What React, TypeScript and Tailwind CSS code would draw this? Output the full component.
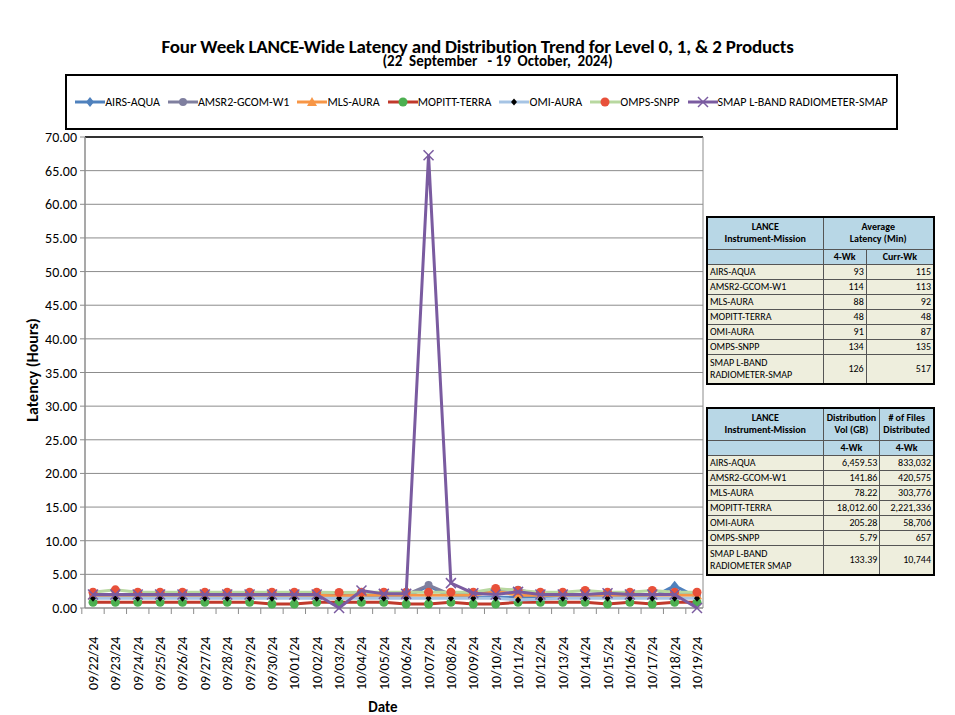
import React from 'react';

const dates = [
  '09/22/24','09/23/24','09/24/24','09/25/24','09/26/24','09/27/24','09/28/24','09/29/24','09/30/24','10/01/24',
  '10/02/24','10/03/24','10/04/24','10/05/24','10/06/24','10/07/24','10/08/24','10/09/24','10/10/24','10/11/24',
  '10/12/24','10/13/24','10/14/24','10/15/24','10/16/24','10/17/24','10/18/24','10/19/24',
];

const fill = (v: number, o: Record<number, number> = {}) => dates.map((_, i) => (o[i] !== undefined ? o[i] : v));

const series = [
  { name: 'AIRS-AQUA', color: '#4f81bd', marker: 'diamond', data: fill(1.6, { 15: 3.3, 26: 3.3, 11: 1.5 }) },
  { name: 'AMSR2-GCOM-W1', color: '#7f7f9f', marker: 'circle', data: fill(2.0, { 11: 1.9, 15: 3.4, 18: 2.6, 19: 2.7 }) },
  { name: 'MLS-AURA', color: '#f79646', marker: 'triangle', data: fill(1.9, { 11: 1.8, 18: 2.5 }) },
  { name: 'MOPITT-TERRA', color: '#c0392b', marker: 'gcircle', data: fill(0.85, { 8: 0.6, 9: 0.6, 14: 0.6, 15: 0.6, 17: 0.6, 18: 0.6, 23: 0.6, 25: 0.6 }) },
  { name: 'OMI-AURA', color: '#a6c4e4', marker: 'black', data: fill(1.45, { 19: 1.2, 20: 1.3 }) },
  { name: 'OMPS-SNPP', color: '#b8d8a0', marker: 'dot', data: fill(2.35, { 1: 2.7, 18: 2.9, 19: 2.6, 22: 2.6, 25: 2.6, 11: 2.3 }) },
  { name: 'SMAP L-BAND RADIOMETER-SMAP', color: '#7a5ba0', marker: 'x', data: fill(2.0, { 11: 0, 12: 2.6, 13: 2.1, 14: 2.1, 15: 67.3, 16: 3.7, 17: 2.2, 19: 2.4, 23: 2.2, 27: 0 }) },
];

// svg coordinates: svg top sits at page y = 131
const TOP = 6, BOT = 477;
const X0 = 93, DX = (697 - 93) / 27;
const yOf = (v: number) => BOT - (v / 70) * (BOT - TOP);
const xOf = (i: number) => X0 + i * DX;

function Marker({ kind, x, y, color }: { kind: string; x: number; y: number; color: string }) {
  if (kind === 'diamond') return <polygon points={`${x},${y - 5} ${x + 4},${y} ${x},${y + 5} ${x - 4},${y}`} fill={color} />;
  if (kind === 'circle') return <circle cx={x} cy={y} r={4} fill={color} />;
  if (kind === 'triangle') return <polygon points={`${x},${y - 5} ${x + 5},${y + 4} ${x - 5},${y + 4}`} fill={color} />;
  if (kind === 'gcircle') return <circle cx={x} cy={y} r={4.5} fill="#4caf50" />;
  if (kind === 'black') return <polygon points={`${x},${y - 3.5} ${x + 3},${y} ${x},${y + 3.5} ${x - 3},${y}`} fill="#000" />;
  if (kind === 'dot') return <circle cx={x} cy={y} r={4.5} fill="#e8503a" />;
  return (
    <g stroke={color} strokeWidth={1.5}>
      <line x1={x - 5} y1={y - 5} x2={x + 5} y2={y + 5} />
      <line x1={x - 5} y1={y + 5} x2={x + 5} y2={y - 5} />
    </g>
  );
}

function LegendIcon({ s }: { s: (typeof series)[number] }) {
  return (
    <svg width="30" height="12" className="shrink-0">
      <line x1="0" y1="6" x2="30" y2="6" stroke={s.color} strokeWidth="3" />
      <Marker kind={s.marker} x={15} y={6} color={s.color} />
    </svg>
  );
}

function Chart() {
  const ticks = Array.from({ length: 15 }, (_, i) => i * 5);
  return (
    <svg width="705" height="584" className="block">
      {ticks.map((t) => (
        <g key={t}>
          {t > 0 && <line x1={85} x2={703} y1={yOf(t)} y2={yOf(t)} stroke="#8c8c8c" strokeWidth={1} />}
          <line x1={80} x2={85} y1={yOf(t)} y2={yOf(t)} stroke="#8c8c8c" />
          <text x={77} y={yOf(t) + 5} textAnchor="end" fontSize="14" fill="#000">{t.toFixed(2)}</text>
        </g>
      ))}
      <line x1={85} x2={703} y1={TOP} y2={TOP} stroke="#000" strokeWidth={1.5} />
      <line x1={85} x2={85} y1={TOP} y2={BOT} stroke="#8c8c8c" strokeWidth={1.5} />
      <line x1={703} x2={703} y1={TOP} y2={BOT} stroke="#8c8c8c" />
      <line x1={85} x2={703} y1={BOT} y2={BOT} stroke="#8c8c8c" strokeWidth={1.5} />
      {dates.map((d, i) => (
        <g key={d}>
          <line x1={xOf(i) - DX / 2} x2={xOf(i) - DX / 2} y1={BOT} y2={BOT + 6} stroke="#8c8c8c" />
          <text transform={`translate(${xOf(i) + 5},${BOT + 82}) rotate(-90)`} fontSize="14" fill="#000">{d}</text>
        </g>
      ))}
      {series.map((s) => (
        <g key={s.name}>
          <polyline
            fill="none"
            stroke={s.color}
            strokeWidth={3}
            points={s.data.map((v, i) => `${xOf(i)},${yOf(v)}`).join(' ')}
          />
          {s.data.map((v, i) => (
            <Marker key={i} kind={s.marker} x={xOf(i)} y={yOf(v)} color={s.color} />
          ))}
        </g>
      ))}
      <text x={383} y={581} textAnchor="middle" fontSize="15" fontWeight="bold">Date</text>
    </svg>
  );
}

function DataTable({ head, rows }: { head: [React.ReactNode, React.ReactNode, string, string]; rows: [string, string, string][] }) {
  const th = 'border border-[#555] bg-[#b8d7e6] font-bold text-center leading-[12px]';
  const td = 'border border-[#555] bg-[#eeeedd] leading-[12px] px-[2px]';
  return (
    <table className="border-collapse border-2 border-black text-[10px] w-[229px]">
      <tbody>
        <tr>
          <th className={`${th} w-[116px] h-[32px]`}>LANCE<br />Instrument-Mission</th>
          <th className={th} colSpan={head[1] ? 1 : 2}>
            {head[0]}
          </th>
          {head[1] && <th className={th}>{head[1]}</th>}
        </tr>
        <tr>
          <th className={`${th} h-[15px]`}></th>
          <th className={th}>{head[2]}</th>
          <th className={th}>{head[3]}</th>
        </tr>
        {rows.map((r) => (
          <tr key={r[0]}>
            <td className={`${td} ${r[0].length > 20 ? 'h-[30px]' : 'h-[15px]'}`}>{r[0]}</td>
            <td className={`${td} text-right`}>{r[1]}</td>
            <td className={`${td} text-right`}>{r[2]}</td>
          </tr>
        ))}
      </tbody>
    </table>
  );
}

export default function App() {
  return (
    <div className="w-[955px] h-[715px] bg-white overflow-hidden" style={{ fontFamily: 'Calibri, Carlito, "Liberation Sans", sans-serif' }}>
      <div className="text-center pt-[37px] h-[74px]">
        <div className="text-[19px] font-bold leading-[20px] tracking-[-0.2px]">
          Four Week LANCE-Wide Latency and Distribution Trend for Level 0, 1, &amp; 2 Products
        </div>
        <div className="text-[15px] font-bold leading-[15px] pl-[40px] -mt-[3px]">(22&nbsp; September&nbsp;&nbsp; - 19&nbsp; October,&nbsp; 2024)</div>
      </div>
      <div className="ml-[65px] w-[833px] h-[56px] border-2 border-black flex items-center justify-center gap-[8px] text-[12px]">
        {series.map((s) => (
          <div key={s.name} className="flex items-center">
            <LegendIcon s={s} />
            <span>{s.name}</span>
          </div>
        ))}
      </div>
      <div className="flex mt-[1px]">
        <div className="relative w-[705px]">
          <div className="absolute left-[33px] top-[227px] -rotate-90 -translate-x-1/2 text-[16px] font-bold whitespace-nowrap">
            Latency (Hours)
          </div>
          <Chart />
        </div>
        <div className="flex flex-col gap-[22px] pt-[85px] ml-[1px]">
          <DataTable
            head={[<>Average<br />Latency (Min)</>, '', '4-Wk', 'Curr-Wk']}
            rows={[
              ['AIRS-AQUA', '93', '115'],
              ['AMSR2-GCOM-W1', '114', '113'],
              ['MLS-AURA', '88', '92'],
              ['MOPITT-TERRA', '48', '48'],
              ['OMI-AURA', '91', '87'],
              ['OMPS-SNPP', '134', '135'],
              ['SMAP L-BAND RADIOMETER-SMAP', '126', '517'],
            ]}
          />
          <DataTable
            head={[<>Distribution<br />Vol (GB)</>, <># of Files<br />Distributed</>, '4-Wk', '4-Wk']}
            rows={[
              ['AIRS-AQUA', '6,459.53', '833,032'],
              ['AMSR2-GCOM-W1', '141.86', '420,575'],
              ['MLS-AURA', '78.22', '303,776'],
              ['MOPITT-TERRA', '18,012.60', '2,221,336'],
              ['OMI-AURA', '205.28', '58,706'],
              ['OMPS-SNPP', '5.79', '657'],
              ['SMAP L-BAND RADIOMETER SMAP', '133.39', '10,744'],
            ]}
          />
        </div>
      </div>
    </div>
  );
}
